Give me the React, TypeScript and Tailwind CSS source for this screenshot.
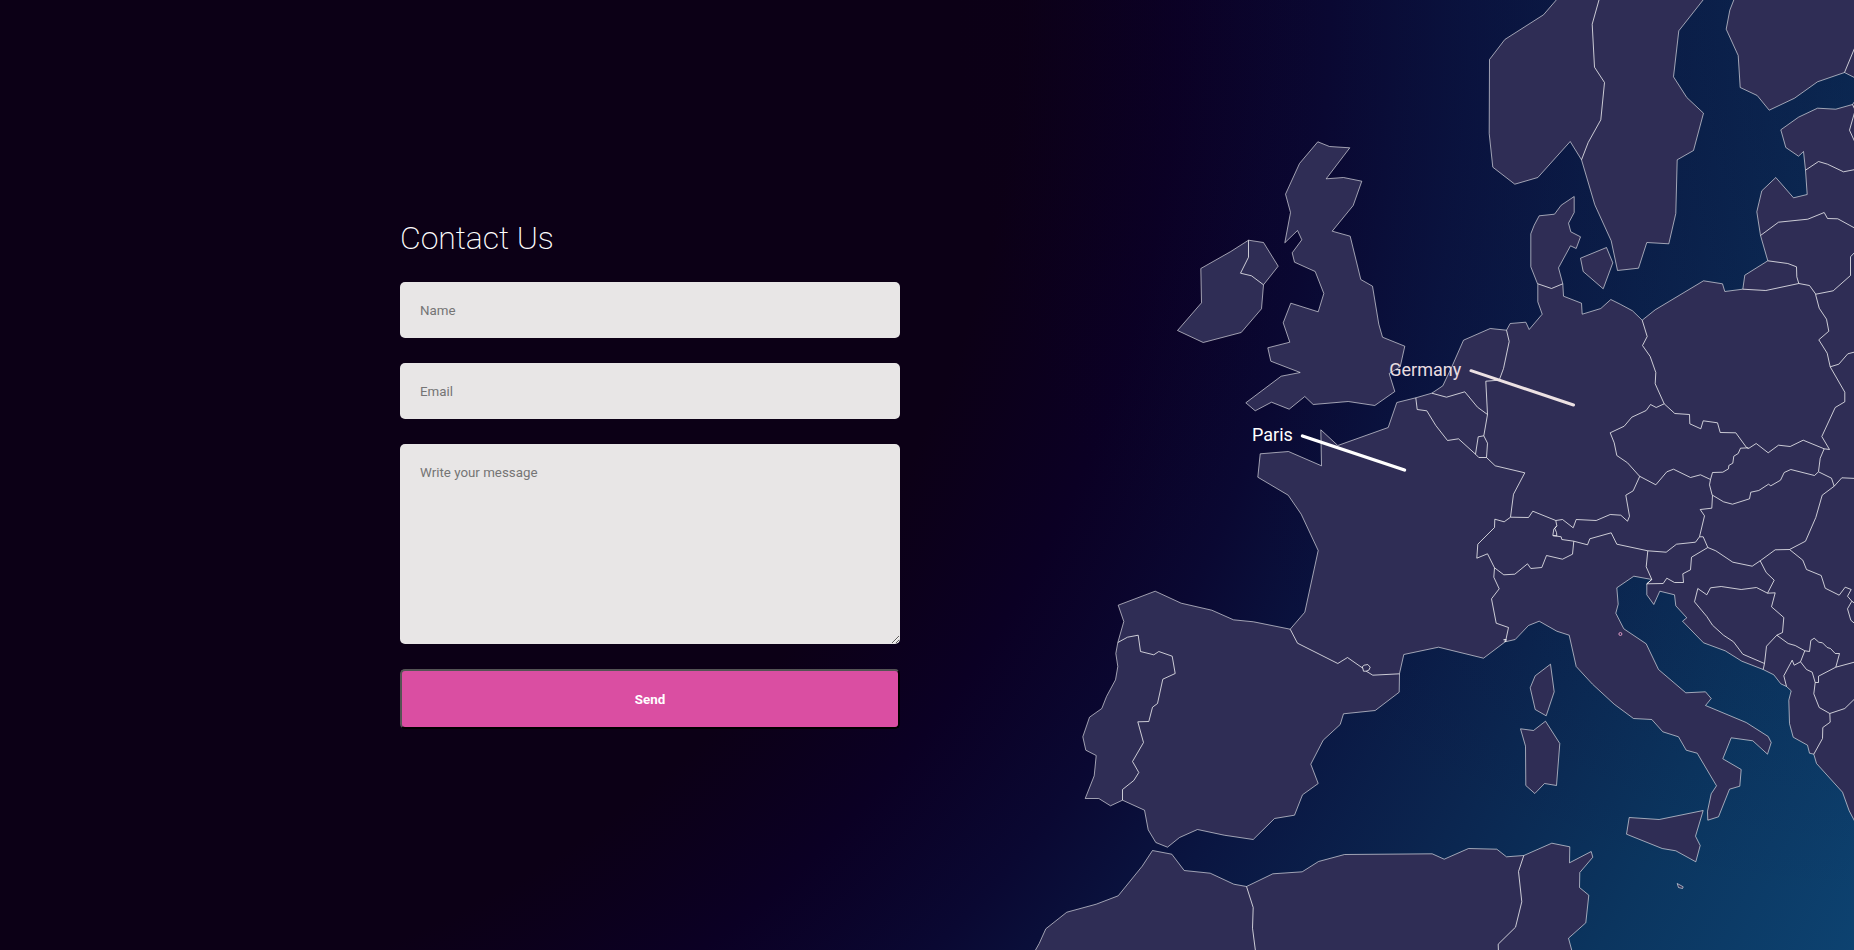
import React from "react";

/** Shape outlines are surveyed per tile, in thirds of a pixel from the tile's corner. */
type Tile = [number, number];
type Part = [Tile, string];

const A: Tile = [1160, 120];
const B: Tile = [1460, 0];
const C: Tile = [1400, 260];
const D: Tile = [1620, 260];
const E: Tile = [1230, 380];
const F: Tile = [1460, 460];
const G: Tile = [1640, 460];
const H: Tile = [1640, 610];
const I: Tile = [1030, 580];
const J: Tile = [1300, 640];

const join = (parts: Part[]) =>
  parts
    .flatMap(([[ox, oy], pts]) =>
      pts.split(" ").map((p) => {
        const [x, y] = p.split(",").map(Number);
        return `${(ox + (x + 0.5) / 3).toFixed(1)},${(oy + (y + 0.5) / 3).toFixed(1)}`;
      }),
    )
    .join(" ");

const lands: Part[][] = [
  // Great Britain
  [[A, "473,65 508,79 569,83 498,176 550,172 605,183 579,256 516,333 570,348 602,478 637,498 656,612 667,651 734,678 720,740 687,760 704,814 644,856 564,844 459,853 434,829 387,867 334,846 285,872 257,848 363,768 420,757 332,723 323,683 389,666 369,608 392,549 474,575 491,520 465,454 403,426 396,398 425,359 412,331 374,368 391,277 376,222 418,130"]],
  // Ireland
  [[A, "265,360 310,367 354,438 310,494 304,566 243,637 129,667 52,631 124,548 122,445 212,394"]],
  // Norway and Sweden
  [[B, "293,-6 250,44 134,118 88,178 87,400 98,501 164,552 233,532 330,424 364,479 404,614 453,722 472,811 535,804 560,727 626,731 647,640 651,479 700,451 730,339 680,292 640,230 656,92 733,-6"]],
  // Finland
  [[B, "823,-6 809,30 798,87 834,166 840,262 891,286 927,330 1003,294 1072,245 1153,217 1200,241 1200,-6"]],
  // Zealand
  [[B, "439,742 458,788 429,866 369,814 361,774"]],
  // Continental Europe
  [
    [B, "1200,280 1177,313 1127,327 1072,324 1015,351 962,389 977,442 1015,468 1030,454 1036,510 1041,583 1000,593 947,532 905,572 890,635 901,706 923,782 854,825 848,867 794,874 787,851 730,842"],
    [D, "105,149 66,180 37,152 0,132"],
    [C, "632,118 602,145 546,162 544,129 490,108 488,71"],
    [B, "295,803 331,737 348,745 361,710 332,695 325,669 342,637 342,589 303,615 283,642 237,647 222,675 212,701 212,800 233,853"],
    [C, "413,125 426,162 387,208 377,186 330,190 319,210 270,205 190,240 155,320 128,377 95,399 47,413"],
    [E, "500,67 474,142 323,196 272,149 274,257 175,214 90,221 83,291 174,345 213,402 264,511 224,696 180,747"],
    [I, "670,125 610,119 545,90 453,69 375,33 264,75 281,124 263,187 257,220 263,259 256,299 229,349 215,385 178,411 158,470 167,510 198,526 192,587 165,655 206,655 241,677 277,660 343,690 354,749 377,787 412,801 448,772 502,748 582,765 669,778 733,715 793,705 817,644 864,610"],
    [J, "32,372 69,300 120,253 130,221 225,211 297,156 298,100 311,43 415,21 550,54 615,5"],
    [F, "165,538 205,496 237,483 290,513 327,525 348,619"],
    [J, "877,132 942,192 1000,235 1055,238 1088,275 1135,290"],
    [H, "138,420 171,429 229,527 213,551 202,603 203,630 235,620 268,537 299,528 303,478 248,446 273,383 338,392 382,432 393,397 384,379 318,337 196,286 213,265 196,245 137,248 55,178 18,101"],
    [F, "491,506 467,459 474,432 470,383 521,348 575,358"],
    [G, "20,371 20,404 41,433 59,393 103,404 107,437 140,473"],
    [H, "127,33 190,98 255,122 305,153 369,178 401,194 422,221 439,229 453,242 446,270 448,340 459,381 502,405 508,429 521,432 529,460 607,546 627,602 660,665 660,0"],
  ],
  // Corsica, Sardinia, Sicily, Malta
  [[J, "751,72 762,155 738,227 705,208 690,143 705,107"]],
  [[J, "736,243 779,310 769,436 733,430 704,460 677,436 676,318 661,266 700,271"]],
  [[H, "189,601 166,678 180,706 167,755 107,722 66,715 -41,672 -33,622 57,628"]],
  [[H, "111,820 129,830 127,835 115,832"]],
  // North Africa
  [
    [I, "10,1120 27,1090 47,1046 110,996 198,972 264,947 336,858 367,811 425,822 462,871 540,879 611,912 649,919 728,881 816,875 865,844"],
    [J, "133,643 396,641 432,657 505,625 590,627 619,650 671,646 755,609 809,620 808,668 873,634 878,651 839,697 838,742 866,765 857,848 805,894 820,950"],
  ],
];

const borders: Part[][] = [
  [[A, "265,360 265,411 241,459 274,467 310,494"]],
  [[B, "418,-6 396,72 403,201 433,247 422,359 384,427 364,479"]],
  [[B, "1153,217 1190,128"]],
  [[B, "1036,510 1075,484 1102,492 1150,515 1190,507"]],
  [[B, "1177,313 1185,330 1168,390 1190,438"]],
  [[B, "901,706 955,666 1043,657 1092,637 1102,655 1133,656 1190,687"]],
  [[B, "923,782 983,790 1009,800 1010,830 1016,850"]],
  [[B, "848,867 917,871 1016,850 1048,856 1067,882 1119,872 1171,826 1171,770 1190,750"]],
  [[D, "586,102 597,144 619,177 626,213 596,239 621,279 630,320 674,396 674,425 645,442 605,529 628,568 612,566"]],
  [[D, "630,320 656,312 683,281 710,274"]],
  [[D, "66,180 81,229 67,256 90,289 107,337 105,371 132,431"]],
  [[D, "132,431 108,442 91,433 78,451 35,471 12,498"], [C, "630,518 642,548 650,586"], [D, "22,608 58,648"]],
  [[D, "132,431 164,460 208,463 209,491 242,506 249,482 292,488 300,517 347,518 379,562 385,565 408,550 444,578 475,555 510,559 549,540 612,566 600,594 595,634"]],
  [[D, "385,563 361,564 354,580 341,588 338,609 326,616 325,626 308,636 277,637 271,658 268,674 276,705"]],
  [[D, "58,648 107,674 140,635 160,627 211,652 241,644 271,658"]],
  [[G, "217,105 250,125 277,132 328,116 332,96 356,91 385,72 392,77 421,60 432,37 452,28 523,46 535,35 574,54 582,78 605,53 650,55"]],
  [[G, "582,78 546,105 527,172 496,243 448,268"]],
  [[F, "539,48 519,92 497,105 508,168 502,183 482,165 450,163 408,181 348,178 339,203 307,178 287,181 218,153 205,172 151,171"]],
  [[C, "259,592 285,617 374,638"], [F, "160,102 151,171 132,185 104,177 103,202 53,252 50,294 82,281 103,323"]],
  [[F, "103,323 131,344 164,342 202,311 212,325 245,322 259,286 307,297 337,282 341,243"]],
  [[F, "103,323 101,351 117,386 94,416 108,489 145,502 137,540 135,545"]],
  [[F, "130,538 138,538 137,544 131,542"]],
  [[F, "287,181 290,197 281,207 278,226 303,230 305,238 341,243 382,254 389,236 453,218 470,252 563,272"]],
  [[F, "290,197 284,205 289,217 290,227 279,227"]],
  [[G, "23,272 78,276 109,252 166,246 178,230 189,230 203,262"]],
  [[G, "217,105 215,144 180,148 193,167 178,230"]],
  [[G, "23,272 18,320 35,358 20,371 69,370 80,354 103,367 130,367 128,341 151,329 154,291 203,262 227,272 278,306 336,318 360,302 405,269 448,268 488,300 499,328 543,346 555,384 597,405 615,381 633,388 622,408 635,423 622,446 632,480 646,492"]],
  [[G, "635,423 650,434"]],
  [[G, "360,302 378,337 402,360 382,399 349,382 303,388 243,379 211,383 200,404 173,385 163,425 184,450"], [H, "200,19 217,45 250,75 280,95 308,132 373,160"]],
  [[G, "382,399 405,398 394,440 431,472"], [H, "427,67 410,75 379,108 373,160 369,178"]],
  [[H, "410,75 444,100 465,106 494,122 481,155 462,165 456,150 431,197 439,229"]],
  [[H, "494,122 508,124 512,91 522,84 536,96 547,98 561,112 571,115 585,130 598,130 587,171"]],
  [[H, "481,155 499,178 516,186 525,217 521,251 537,292 569,310 570,336 548,352 547,385 521,432"]],
  [[H, "525,217 535,217 535,198 587,171 650,154"]],
  [[H, "569,310 614,295 650,260"]],
  [[C, "319,210 327,244 310,325 297,360 257,363 262,463 251,527"]],
  [[C, "95,399 139,411 194,395 232,441 262,463"]],
  [[C, "47,413 51,448 80,452 107,496 142,541 175,536 226,582 234,530 251,527 262,549 259,592 236,592 226,582"]],
  [[C, "413,71 454,85 488,71"]],
  [[I, "263,187 292,171 324,165 331,214 371,224 386,214 426,228 435,280 398,297 382,370 367,381 356,424 323,425 340,487 307,544 326,577 311,601 277,628 277,660"]],
  [[E, "180,747 202,789 323,850 352,832 398,864 396,860 402,855 413,853 420,861 416,870 408,873 400,873 398,864"]],
  [[E, "408,873 428,885 508,881"]],
  [[I, "649,919 669,982 667,1044 677,1120"]],
  [[J, "671,646 655,694 665,785 646,861 594,912 595,940"]],
];

const landPoints = lands.map(join);
const borderPoints = borders.map(join);

function EuropeMap() {
  return (
    <svg viewBox="900 0 954 950" width={954} height={950} className="block font-[Roboto,sans-serif] text-[18px]">
      <g fill="#2f2d55" stroke="#ffffff" strokeOpacity={0.58} strokeWidth={1}>
        {landPoints.map((p, i) => (
          <polygon key={i} points={p} />
        ))}
        <circle cx={1620.4} cy={634} r={1.5} stroke="#e9a3cb" strokeOpacity={0.9} />
      </g>
      <g fill="none" stroke="#ffffff" strokeOpacity={0.75} strokeWidth={1}>
        {borderPoints.map((p, i) => (
          <polyline key={i} points={p} />
        ))}
      </g>
      <g strokeWidth={3} strokeLinecap="round">
        <line x1={1471} y1={370.7} x2={1573.5} y2={405} stroke="#ece1e3" />
        <line x1={1302.5} y1={436} x2={1404.5} y2={470} stroke="#ffffff" strokeWidth={3.4} />
      </g>
      <text x={1389.3} y={376} fill="#e8dde0">Germany</text>
      <text x={1252} y={441} fill="#ffffff">Paris</text>
    </svg>
  );
}

const field =
  "block w-full rounded-[5px] bg-[#e8e6e6] px-5 text-[13.333px] text-black outline-none placeholder:text-[#757575]";

export default function App() {
  return (
    <main className="flex h-[950px] w-full overflow-hidden bg-[radial-gradient(circle_at_100%_0,rgba(10,8,50,0.35)_0px,rgba(10,8,50,0)_900px),radial-gradient(circle_at_0_0,#0c0016_0px,#0c0016_1020px,#0b0024_1180px,#0a0832_1330px,#0a1541_1470px,#0b2650_1670px,#0b355f_1860px,#0d4270_2083px)] font-[Roboto,sans-serif]">
      <section className="w-[900px] shrink-0 pt-[219px] pl-[400px]">
        <form className="flex w-[500px] flex-col gap-[25px]" onSubmit={(e) => e.preventDefault()}>
          <h1 className="h-[38px] text-[32px] leading-[38px] font-extralight tracking-[-0.1px] text-white">
            Contact Us
          </h1>
          <input type="text" placeholder="Name" className={`${field} h-14`} />
          <input type="email" placeholder="Email" className={`${field} h-14`} />
          <textarea placeholder="Write your message" className={`${field} h-[200px] resize py-[21px] leading-4`} />
          <button
            type="submit"
            className="h-[60px] w-full rounded-[5px] border-2 border-black bg-[#da4ea2] pt-px text-[13.333px] font-bold text-white [border-style:outset]"
          >
            Send
          </button>
        </form>
      </section>
      <section className="h-[950px] min-w-0 flex-1 overflow-hidden">
        <EuropeMap />
      </section>
    </main>
  );
}
